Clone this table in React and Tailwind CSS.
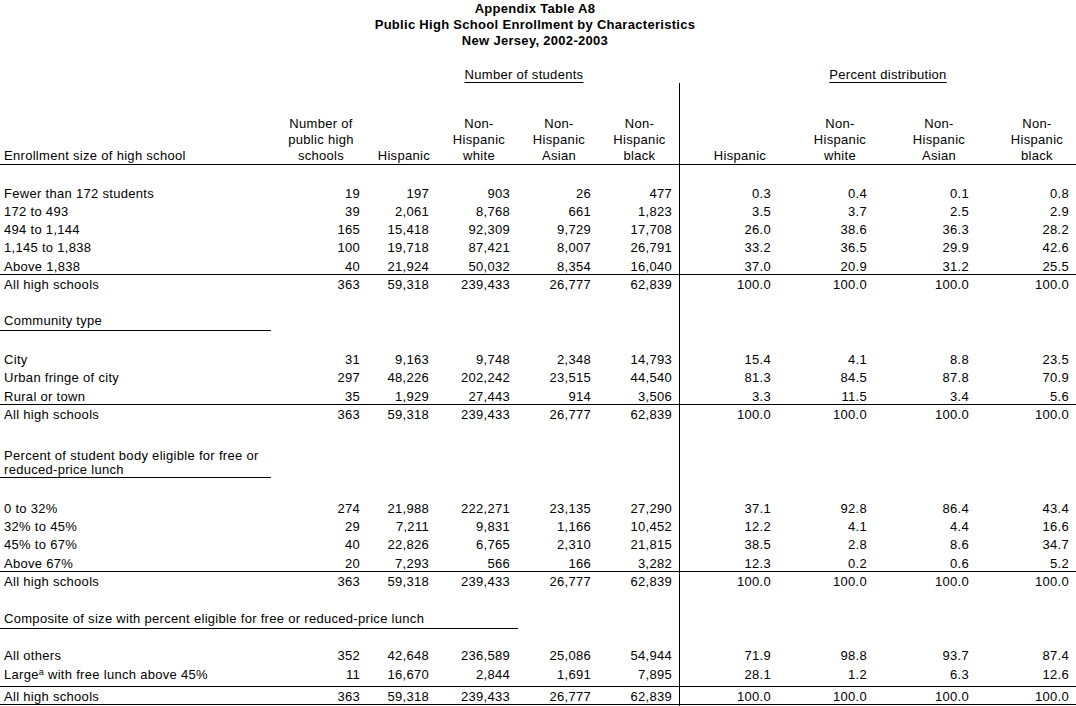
const GRID = 'grid grid-cols-[280px_82px_78px_78px_82px_79px_121px_80px_118px_78px]'
const PAD = ['pl-[4px]', 'pr-[2px]', 'pr-[11px]', 'pr-[8px]', 'pr-[9px]', 'pr-[7px]', 'pr-[29px]', 'pr-[13px]', 'pr-[29px]', 'pr-[7px]']

const TOTAL = ['All high schools', '363', '59,318', '239,433', '26,777', '62,839', '100.0', '100.0', '100.0', '100.0']

const TAMANHO = [
  ['Fewer than 172 students', '19', '197', '903', '26', '477', '0.3', '0.4', '0.1', '0.8'],
  ['172 to 493', '39', '2,061', '8,768', '661', '1,823', '3.5', '3.7', '2.5', '2.9'],
  ['494 to 1,144', '165', '15,418', '92,309', '9,729', '17,708', '26.0', '38.6', '36.3', '28.2'],
  ['1,145 to 1,838', '100', '19,718', '87,421', '8,007', '26,791', '33.2', '36.5', '29.9', '42.6'],
  ['Above 1,838', '40', '21,924', '50,032', '8,354', '16,040', '37.0', '20.9', '31.2', '25.5'],
]

const COMUNIDADE = [
  ['City', '31', '9,163', '9,748', '2,348', '14,793', '15.4', '4.1', '8.8', '23.5'],
  ['Urban fringe of city', '297', '48,226', '202,242', '23,515', '44,540', '81.3', '84.5', '87.8', '70.9'],
  ['Rural or town', '35', '1,929', '27,443', '914', '3,506', '3.3', '11.5', '3.4', '5.6'],
]

const ALMOCO = [
  ['0 to 32%', '274', '21,988', '222,271', '23,135', '27,290', '37.1', '92.8', '86.4', '43.4'],
  ['32% to 45%', '29', '7,211', '9,831', '1,166', '10,452', '12.2', '4.1', '4.4', '16.6'],
  ['45% to 67%', '40', '22,826', '6,765', '2,310', '21,815', '38.5', '2.8', '8.6', '34.7'],
  ['Above 67%', '20', '7,293', '566', '166', '3,282', '12.3', '0.2', '0.6', '5.2'],
]

function Celulas({ cells }) {
  return cells.map((c, i) => (
    <div
      key={i}
      className={`${PAD[i]} ${i === 0 ? 'text-left whitespace-nowrap' : 'text-right'} ${i === 6 ? 'border-l border-black' : ''}`}
    >
      {c}
    </div>
  ))
}

// tipo: normal | regua (linha com fio embaixo) | total | alto (com sobrescrito)
function Linha({ cells, tipo = 'normal' }) {
  const cls = {
    normal: 'h-[18px] leading-[18px]',
    regua: 'h-[18px] leading-[19px] border-b border-black',
    total: 'h-[18px] leading-[20px]',
    fim: 'h-[18px] leading-[19px] border-b border-black',
    alto: 'h-[22px] leading-[19px] border-b border-black',
  }[tipo]
  return (
    <div className={`${GRID} ${cls}`}>
      <Celulas cells={cells} />
    </div>
  )
}

function Bloco({ linhas }) {
  return linhas.map((l, i) => <Linha key={i} cells={l} tipo={i === linhas.length - 1 ? 'regua' : 'normal'} />)
}

function Espaco({ h }) {
  return (
    <div className={`${GRID} ${h}`}>
      <div className="col-span-6" />
      <div className="border-l border-black" />
    </div>
  )
}

function Titulo({ children, largura = 'w-[271px]', dupla }) {
  return (
    <div className={GRID}>
      <div className="col-span-6">
        <div className={`${largura} pl-[4px] border-b border-black whitespace-nowrap ${dupla ? 'leading-[14px]' : 'leading-[18px]'}`}>
          {children}
        </div>
      </div>
      <div className="border-l border-black" />
    </div>
  )
}

function Cab({ children, className = '' }) {
  return <div className={`flex flex-col justify-end leading-[16px] ${className}`}>{children}</div>
}

function NaoHisp({ grupo }) {
  return (
    <Cab className="text-center">
      <div>Non-</div>
      <div>Hispanic</div>
      <div>{grupo}</div>
    </Cab>
  )
}

export default function App() {
  return (
    <div className="w-[1076px] h-[706px] overflow-hidden bg-white text-black font-['Liberation_Sans',Arial,sans-serif] text-[13px] tracking-[0.3px]">
      <div className="h-[48px] pt-[1px] pr-[6px] text-center font-bold leading-[16px]">
        <div>Appendix Table A8</div>
        <div>Public High School Enrollment by Characteristics</div>
        <div>New Jersey, 2002-2003</div>
      </div>

      <div className={`${GRID} mt-[18px] h-[17px] leading-[18px]`}>
        <div className="col-span-2" />
        <div className="col-span-4 pl-[7px] text-center">
          <span className="underline underline-offset-[3px]">Number of students</span>
        </div>
        <div className="col-span-4 pl-[21px] text-center">
          <span className="underline underline-offset-[3px]">Percent distribution</span>
        </div>
      </div>

      <div className={`${GRID} h-[82px] border-b border-black`}>
        <Cab className="pl-[4px]">Enrollment size of high school</Cab>
        <Cab className="text-center">
          <div>Number of</div>
          <div>public high</div>
          <div>schools</div>
        </Cab>
        <Cab className="text-right pr-[10px]">Hispanic</Cab>
        <NaoHisp grupo="white" />
        <NaoHisp grupo="Asian" />
        <NaoHisp grupo="black" />
        <Cab className="text-center border-l border-black">Hispanic</Cab>
        <NaoHisp grupo="white" />
        <NaoHisp grupo="Asian" />
        <NaoHisp grupo="black" />
      </div>

      <Espaco h="h-[20px]" />
      <Bloco linhas={TAMANHO} />
      <Linha cells={TOTAL} tipo="total" />

      <Espaco h="h-[19px]" />
      <Titulo>Community type</Titulo>
      <Espaco h="h-[20px]" />
      <Bloco linhas={COMUNIDADE} />
      <Linha cells={TOTAL} tipo="total" />

      <Espaco h="h-[26px]" />
      <Titulo dupla>
        Percent of student body eligible for free or
        <br />
        reduced-price lunch
      </Titulo>
      <Espaco h="h-[22px]" />
      <Bloco linhas={ALMOCO} />
      <Linha cells={TOTAL} tipo="total" />

      <Espaco h="h-[20px]" />
      <Titulo largura="w-[518px]">Composite of size with percent eligible for free or reduced-price lunch</Titulo>
      <Espaco h="h-[18px]" />
      <Linha cells={['All others', '352', '42,648', '236,589', '25,086', '54,944', '71.9', '98.8', '93.7', '87.4']} />
      <Linha
        tipo="alto"
        cells={[
          <span key="l">Large<sup className="text-[9px]">a</sup> with free lunch above 45%</span>,
          '11', '16,670', '2,844', '1,691', '7,895', '28.1', '1.2', '6.3', '12.6',
        ]}
      />
      <Linha cells={TOTAL} tipo="fim" />
      <Espaco h="h-[2px]" />
    </div>
  )
}
